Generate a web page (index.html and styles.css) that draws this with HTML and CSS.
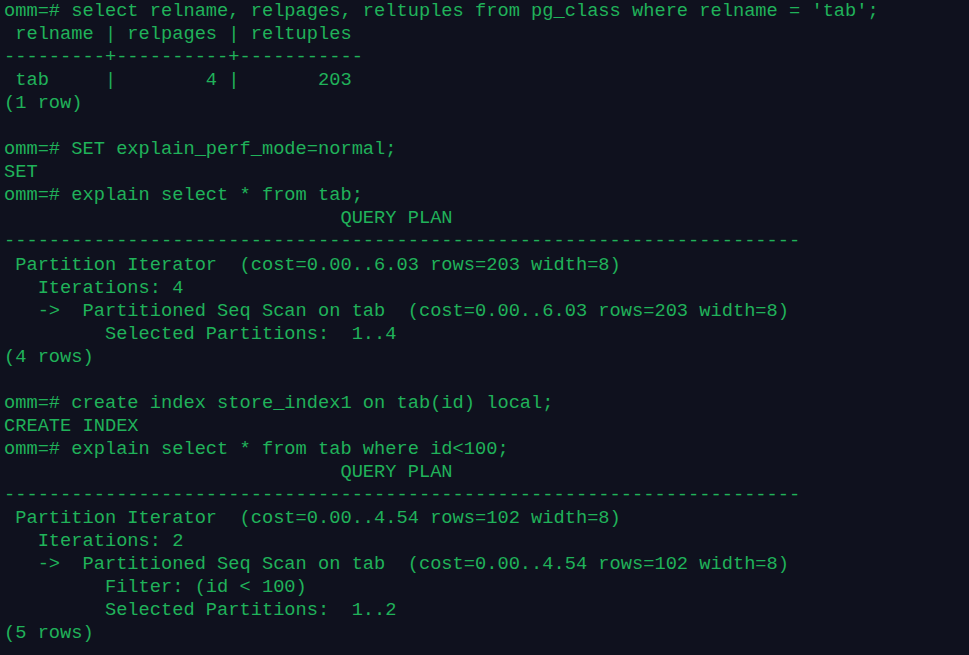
FILE: index.html
```html
<!DOCTYPE html>
<html>
<head>
<meta charset="utf-8">
<link rel="stylesheet" href="styles.css">
</head>
<body>
<pre class="term">omm=# select relname, relpages, reltuples from pg_class where relname = 'tab';
 relname | relpages | reltuples
---------+----------+-----------
 tab     |        4 |       203
(1 row)

omm=# SET explain_perf_mode=normal;
SET
omm=# explain select * from tab;
                              QUERY PLAN
-----------------------------------------------------------------------
 Partition Iterator  (cost=0.00..6.03 rows=203 width=8)
   Iterations: 4
   ->  Partitioned Seq Scan on tab  (cost=0.00..6.03 rows=203 width=8)
         Selected Partitions:  1..4
(4 rows)

omm=# create index store_index1 on tab(id) local;
CREATE INDEX
omm=# explain select * from tab where id&lt;100;
                              QUERY PLAN
-----------------------------------------------------------------------
 Partition Iterator  (cost=0.00..4.54 rows=102 width=8)
   Iterations: 2
   ->  Partitioned Seq Scan on tab  (cost=0.00..4.54 rows=102 width=8)
         Filter: (id &lt; 100)
         Selected Partitions:  1..2
(5 rows)</pre>
</body>
</html>
```
FILE: styles.css
```css
html, body {
  margin: 0;
  padding: 0;
  background: #0f111e;
  height: 100%;
  overflow: hidden;
}
.term {
  margin: 0;
  padding: 0 0 0 4px;
  font-family: "Liberation Mono", monospace;
  font-size: 18.71px;
  line-height: 23.04px;
  color: #20b25a;
  white-space: pre;
}
```
